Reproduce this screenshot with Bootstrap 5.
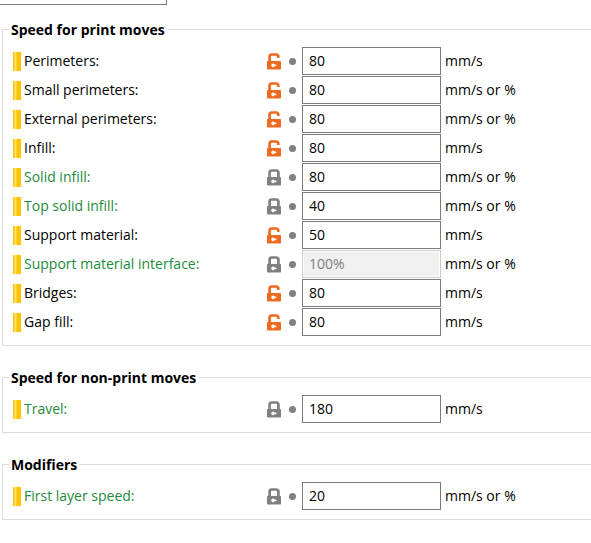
<!DOCTYPE html>
<html lang="en">
<head>
<meta charset="utf-8">
<meta name="viewport" content="width=device-width, initial-scale=1">
<title>Speed settings</title>
<link rel="stylesheet" href="https://cdn.jsdelivr.net/npm/bootstrap@5.3.0/dist/css/bootstrap.min.css">
<style>
  body { font: 14px/20px "Open Sans", "Noto Sans", sans-serif; color: #000; background: #fff; }
  .preset-box { width: 168px; height: 28px; margin: -23px 0 14px -1px; border: 1px solid #7a7a7a; }
  .group { margin: 0 0 21px 2px; padding: 7px 0 9px 10px; border: 1px solid #dcdcdc; border-right: 0; }
  .group > legend { margin-left: -4px; padding: 0 3px 0 2px; font-size: 14px; line-height: 21px; font-weight: 700; }
  .setting { height: 28px; }
  .setting + .setting { margin-top: 1px; }
  .mode-bar { width: 8px; height: 19px; background: linear-gradient(90deg, #ffc400 1px, #ffd432 1px 2px, #ffe173 2px 3px, #ffd432 3px 4px, #ffc400 4px); }
  .setting-label { width: 246px; padding-left: 3px; }
  .system { color: #1e8a3c; }
  .icon-btn { line-height: 0; color: #808080; }
  .unlocked { color: #ed6b21; }
  .dot-btn { width: 20px; }
  .value-box { width: 139px; height: 28px; padding: 0 6px 2px; border: 1px solid #7a7a7a; color: #000; background: #fff; }
  .value-box:disabled { border-color: #ccc; background: #f0f0f0; color: #7d7d7d; box-shadow: inset 0 0 0 1px #fff; }
  .unit { padding-left: 4px; }
</style>
<script src="https://cdn.jsdelivr.net/npm/bootstrap@5.3.0/dist/js/bootstrap.bundle.min.js"></script>
</head>
<body>
<svg class="d-none" aria-hidden="true">
  <symbol id="lock-open" viewBox="0 0 15 17">
    <path d="M2.6 9V3.7Q2.6 1.5 4.8 1.5H9Q11.3 1.5 11.3 3.7V5" fill="none" stroke="currentColor" stroke-width="2.7"/>
    <path fill-rule="evenodd" fill="currentColor" d="M.8 8H13.2Q14 8 14 8.8V15.7Q14 16.5 13.2 16.5H.8Q0 16.5 0 15.7V8.8Q0 8 .8 8ZM7.4 11.5A1.7 1.7 0 1 0 7.4 13.3H9.3V11.5Z"/>
  </symbol>
  <symbol id="lock-closed" viewBox="0 0 15 17">
    <path d="M2.6 9V3.7Q2.6 1.5 4.8 1.5H9.2Q11.4 1.5 11.4 3.7V9" fill="none" stroke="currentColor" stroke-width="2.7"/>
    <path fill-rule="evenodd" fill="currentColor" d="M.8 8H13.2Q14 8 14 8.8V15.7Q14 16.5 13.2 16.5H.8Q0 16.5 0 15.7V8.8Q0 8 .8 8ZM7.4 11.5A1.7 1.7 0 1 0 7.4 13.3H9.3V11.5Z"/>
  </symbol>
  <symbol id="dot" viewBox="0 0 7 7"><circle cx="3.5" cy="3.5" r="3.5" fill="currentColor"/></symbol>
</svg>
<main class="overflow-hidden">
  <input class="preset-box d-block" type="text" aria-label="Preset">

  <fieldset class="group">
    <legend class="float-none w-auto mb-0">Speed for print moves</legend>
    <div class="setting d-flex align-items-center">
      <span class="mode-bar flex-shrink-0"></span>
      <label class="setting-label flex-shrink-0" for="perimeters">Perimeters:</label>
      <button class="icon-btn unlocked border-0 bg-transparent p-0" type="button" aria-label="Reset to system value"><svg width="15" height="17"><use href="#lock-open"/></svg></button>
      <button class="icon-btn dot-btn border-0 bg-transparent p-0" type="button" aria-label="Undo change"><svg width="7" height="7"><use href="#dot"/></svg></button>
      <input class="value-box" id="perimeters" type="text" value="80">
      <span class="unit">mm/s</span>
    </div>
    <div class="setting d-flex align-items-center">
      <span class="mode-bar flex-shrink-0"></span>
      <label class="setting-label flex-shrink-0" for="small-perimeters">Small perimeters:</label>
      <button class="icon-btn unlocked border-0 bg-transparent p-0" type="button" aria-label="Reset to system value"><svg width="15" height="17"><use href="#lock-open"/></svg></button>
      <button class="icon-btn dot-btn border-0 bg-transparent p-0" type="button" aria-label="Undo change"><svg width="7" height="7"><use href="#dot"/></svg></button>
      <input class="value-box" id="small-perimeters" type="text" value="80">
      <span class="unit">mm/s or %</span>
    </div>
    <div class="setting d-flex align-items-center">
      <span class="mode-bar flex-shrink-0"></span>
      <label class="setting-label flex-shrink-0" for="external-perimeters">External perimeters:</label>
      <button class="icon-btn unlocked border-0 bg-transparent p-0" type="button" aria-label="Reset to system value"><svg width="15" height="17"><use href="#lock-open"/></svg></button>
      <button class="icon-btn dot-btn border-0 bg-transparent p-0" type="button" aria-label="Undo change"><svg width="7" height="7"><use href="#dot"/></svg></button>
      <input class="value-box" id="external-perimeters" type="text" value="80">
      <span class="unit">mm/s or %</span>
    </div>
    <div class="setting d-flex align-items-center">
      <span class="mode-bar flex-shrink-0"></span>
      <label class="setting-label flex-shrink-0" for="infill">Infill:</label>
      <button class="icon-btn unlocked border-0 bg-transparent p-0" type="button" aria-label="Reset to system value"><svg width="15" height="17"><use href="#lock-open"/></svg></button>
      <button class="icon-btn dot-btn border-0 bg-transparent p-0" type="button" aria-label="Undo change"><svg width="7" height="7"><use href="#dot"/></svg></button>
      <input class="value-box" id="infill" type="text" value="80">
      <span class="unit">mm/s</span>
    </div>
    <div class="setting d-flex align-items-center">
      <span class="mode-bar flex-shrink-0"></span>
      <label class="setting-label system flex-shrink-0" for="solid-infill">Solid infill:</label>
      <button class="icon-btn border-0 bg-transparent p-0" type="button" aria-label="Same as system value"><svg width="15" height="17"><use href="#lock-closed"/></svg></button>
      <button class="icon-btn dot-btn border-0 bg-transparent p-0" type="button" aria-label="Undo change"><svg width="7" height="7"><use href="#dot"/></svg></button>
      <input class="value-box" id="solid-infill" type="text" value="80">
      <span class="unit">mm/s or %</span>
    </div>
    <div class="setting d-flex align-items-center">
      <span class="mode-bar flex-shrink-0"></span>
      <label class="setting-label system flex-shrink-0" for="top-solid-infill">Top solid infill:</label>
      <button class="icon-btn border-0 bg-transparent p-0" type="button" aria-label="Same as system value"><svg width="15" height="17"><use href="#lock-closed"/></svg></button>
      <button class="icon-btn dot-btn border-0 bg-transparent p-0" type="button" aria-label="Undo change"><svg width="7" height="7"><use href="#dot"/></svg></button>
      <input class="value-box" id="top-solid-infill" type="text" value="40">
      <span class="unit">mm/s or %</span>
    </div>
    <div class="setting d-flex align-items-center">
      <span class="mode-bar flex-shrink-0"></span>
      <label class="setting-label flex-shrink-0" for="support">Support material:</label>
      <button class="icon-btn unlocked border-0 bg-transparent p-0" type="button" aria-label="Reset to system value"><svg width="15" height="17"><use href="#lock-open"/></svg></button>
      <button class="icon-btn dot-btn border-0 bg-transparent p-0" type="button" aria-label="Undo change"><svg width="7" height="7"><use href="#dot"/></svg></button>
      <input class="value-box" id="support" type="text" value="50">
      <span class="unit">mm/s</span>
    </div>
    <div class="setting d-flex align-items-center">
      <span class="mode-bar flex-shrink-0"></span>
      <label class="setting-label system flex-shrink-0" for="support-interface">Support material interface:</label>
      <button class="icon-btn border-0 bg-transparent p-0" type="button" aria-label="Same as system value"><svg width="15" height="17"><use href="#lock-closed"/></svg></button>
      <button class="icon-btn dot-btn border-0 bg-transparent p-0" type="button" aria-label="Undo change"><svg width="7" height="7"><use href="#dot"/></svg></button>
      <input class="value-box" id="support-interface" type="text" value="100%" disabled>
      <span class="unit">mm/s or %</span>
    </div>
    <div class="setting d-flex align-items-center">
      <span class="mode-bar flex-shrink-0"></span>
      <label class="setting-label flex-shrink-0" for="bridges">Bridges:</label>
      <button class="icon-btn unlocked border-0 bg-transparent p-0" type="button" aria-label="Reset to system value"><svg width="15" height="17"><use href="#lock-open"/></svg></button>
      <button class="icon-btn dot-btn border-0 bg-transparent p-0" type="button" aria-label="Undo change"><svg width="7" height="7"><use href="#dot"/></svg></button>
      <input class="value-box" id="bridges" type="text" value="80">
      <span class="unit">mm/s</span>
    </div>
    <div class="setting d-flex align-items-center">
      <span class="mode-bar flex-shrink-0"></span>
      <label class="setting-label flex-shrink-0" for="gap-fill">Gap fill:</label>
      <button class="icon-btn unlocked border-0 bg-transparent p-0" type="button" aria-label="Reset to system value"><svg width="15" height="17"><use href="#lock-open"/></svg></button>
      <button class="icon-btn dot-btn border-0 bg-transparent p-0" type="button" aria-label="Undo change"><svg width="7" height="7"><use href="#dot"/></svg></button>
      <input class="value-box" id="gap-fill" type="text" value="80">
      <span class="unit">mm/s</span>
    </div>
  </fieldset>

  <fieldset class="group">
    <legend class="float-none w-auto mb-0">Speed for non-print moves</legend>
    <div class="setting d-flex align-items-center">
      <span class="mode-bar flex-shrink-0"></span>
      <label class="setting-label system flex-shrink-0" for="travel">Travel:</label>
      <button class="icon-btn border-0 bg-transparent p-0" type="button" aria-label="Same as system value"><svg width="15" height="17"><use href="#lock-closed"/></svg></button>
      <button class="icon-btn dot-btn border-0 bg-transparent p-0" type="button" aria-label="Undo change"><svg width="7" height="7"><use href="#dot"/></svg></button>
      <input class="value-box" id="travel" type="text" value="180">
      <span class="unit">mm/s</span>
    </div>
  </fieldset>

  <fieldset class="group">
    <legend class="float-none w-auto mb-0">Modifiers</legend>
    <div class="setting d-flex align-items-center">
      <span class="mode-bar flex-shrink-0"></span>
      <label class="setting-label system flex-shrink-0" for="first-layer">First layer speed:</label>
      <button class="icon-btn border-0 bg-transparent p-0" type="button" aria-label="Same as system value"><svg width="15" height="17"><use href="#lock-closed"/></svg></button>
      <button class="icon-btn dot-btn border-0 bg-transparent p-0" type="button" aria-label="Undo change"><svg width="7" height="7"><use href="#dot"/></svg></button>
      <input class="value-box" id="first-layer" type="text" value="20">
      <span class="unit">mm/s or %</span>
    </div>
  </fieldset>
</main>
</body>
</html>
